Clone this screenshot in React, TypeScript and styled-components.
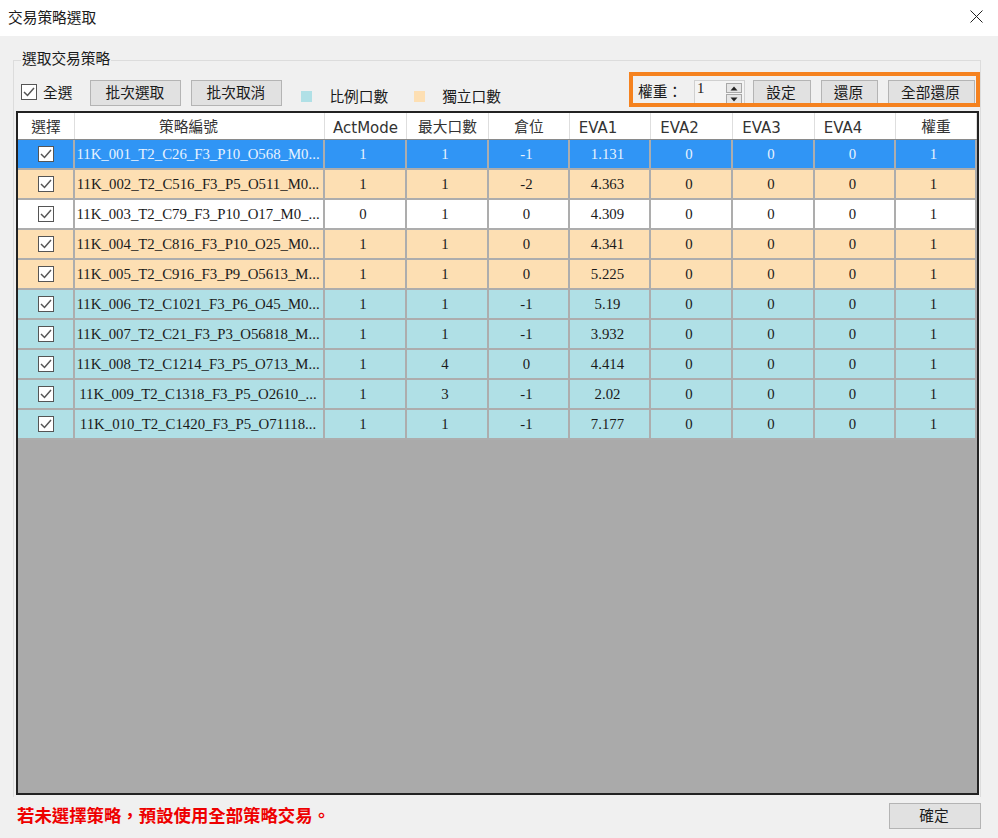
import React from "react";
import styled, { createGlobalStyle } from "styled-components";

const CJK = `"Liberation Serif", "Noto Sans CJK TC", serif`;
const UI = `"Noto Sans CJK TC", "Liberation Sans", sans-serif`;

const GlobalStyle = createGlobalStyle`
  html, body { margin: 0; padding: 0; background: #f0f0f0; }
  * { box-sizing: border-box; }
`;

const Dialog = styled.div`
  width: 998px;
  height: 838px;
  display: flex;
  flex-direction: column;
  background: #f0f0f0;
  font-family: ${UI};
  font-size: 14.7px;
  color: #1a1a1a;
  overflow: hidden;
`;

const TitleBar = styled.div`
  height: 36px;
  flex: none;
  background: #fff;
  display: flex;
  align-items: center;
  justify-content: space-between;
  padding: 0 15px 4px 8px;
`;

const Body = styled.div`
  flex: 1;
  display: flex;
  flex-direction: column;
  padding: 24px 17px 0 13px;
`;

const GroupBox = styled.div`
  position: relative;
  height: 737px;
  flex: none;
  border: 1px solid #dcdcdc;
  border-bottom: none;
  padding: 11px 1px 0 2px;
`;

const GroupTitle = styled.span`
  position: absolute;
  left: 7px;
  top: -13px;
  padding: 0 1px;
  background: #f0f0f0;
  line-height: 20px;
`;

const Toolbar = styled.div`
  height: 39px;
  display: flex;
  align-items: flex-start;
  justify-content: space-between;
`;

const LeftTools = styled.div`
  display: flex;
  align-items: flex-start;
  padding: 8px 0 0 5px;
`;

const SelectAll = styled.label`
  display: flex;
  align-items: center;
  gap: 6px;
  height: 23px;
  margin-right: 18px;
`;

const Box = styled.span`
  width: 16px;
  height: 16px;
  flex: none;
  display: flex;
  align-items: center;
  justify-content: center;
  background: #fff;
  border: 1px solid #555;
  svg { display: block; }
`;

const ToolButton = styled.button<{ $w: number }>`
  width: ${(p) => p.$w}px;
  height: 26px;
  flex: none;
  padding: 0 2px 2px 0;
  background: #e1e1e1;
  border: 1.5px solid #b4b4b4;
  font-family: ${UI};
  font-size: 14.7px;
  color: #1a1a1a;
  line-height: 1;
`;

const LeftButton = styled(ToolButton)`
  margin-right: 10px;
`;

const Legend = styled.div<{ $c: string; $gap: number }>`
  display: flex;
  align-items: center;
  height: 20px;
  margin-top: 6px;
  margin-left: ${(p) => p.$gap}px;
  gap: 17px;
  line-height: 18px;
  &::before {
    content: "";
    width: 11px;
    height: 11px;
    background: ${(p) => p.$c};
  }
`;

const WeightBar = styled.div`
  width: 351px;
  height: 35px;
  margin-right: -1px;
  border: 4px solid #f5821f;
  display: flex;
  align-items: flex-start;
  padding: 4px 0 0 5px;
  overflow: hidden;
`;

const WeightLabel = styled.span`
  width: 56px;
  line-height: 22px;
  flex: none;
`;

const Spin = styled.div`
  width: 51px;
  height: 27px;
  flex: none;
  margin-right: 8px;
  background: #f4f4f4;
  border: 1px solid #d0d0d0;
  display: flex;
  justify-content: space-between;
  padding: 0 2px 0 2px;
  font-family: ${CJK};
  line-height: 15px;
`;

const SpinButtons = styled.div`
  width: 16px;
  display: flex;
  flex-direction: column;
  gap: 1px;
  padding-top: 2px;
`;

const SpinButton = styled.div`
  height: 10px;
  background: #e6e6e6;
  border: 1px solid #a8a8a8;
  display: flex;
  align-items: center;
  justify-content: center;
`;

const WeightButton = styled(ToolButton)`
  margin-right: 10px;
`;

const Grid = styled.div`
  height: 684px;
  flex: none;
  border: 2px solid #222;
  background: #aaaaaa;
  display: flex;
  flex-direction: column;
`;

const COLS = "57px 250px 82px 82px 81px 81px 82px 82px 81px 81px";

const HeaderRow = styled.div`
  display: grid;
  grid-template-columns: ${COLS};
  height: 27px;
  background: #fff;
  border-bottom: 1px solid #8a8a8a;
`;

const HeaderCell = styled.div<{ $latin?: boolean; $shift?: number }>`
  display: flex;
  align-items: center;
  justify-content: center;
  border-right: 1px solid #dedede;
  padding: ${(p) => (p.$latin ? "3px" : "0")} ${(p) => p.$shift ?? 0}px ${(p) => (p.$latin ? "0" : "2px")} 0;
  font-family: ${(p) => (p.$latin ? `"DejaVu Sans", sans-serif` : UI)};
  font-size: ${(p) => (p.$latin ? "15px" : "14.7px")};
  color: #333;
`;

const ROW_BG: Record<string, string> = {
  blue: "#3095f5",
  orange: "#fddfb3",
  white: "#ffffff",
  teal: "#b0e0e6",
};

const Row = styled.div<{ $kind: string }>`
  display: grid;
  grid-template-columns: ${COLS};
  height: 30px;
  background: ${(p) => ROW_BG[p.$kind]};
  color: ${(p) => (p.$kind === "blue" ? "#e8f3ff" : "#1a1a1a")};
  border-bottom: 2px solid #adadad;
`;

const Cell = styled.div`
  display: flex;
  align-items: center;
  justify-content: center;
  border-right: 2px solid #adadad;
  font-family: ${CJK};
  font-size: 14.8px;
  white-space: nowrap;
  overflow: hidden;
`;

const NameCell = styled(Cell)`
  padding-right: 2px;
`;

const NumCell = styled(Cell)`
  padding-right: 4px;
`;

const Footer = styled.div`
  display: flex;
  align-items: flex-start;
  justify-content: space-between;
  padding: 4px 0 0 4px;
`;

const Warning = styled.span`
  color: #ee0000;
  font-weight: 700;
  font-size: 17.4px;
  line-height: 28px;
`;

const OkButton = styled(ToolButton)`
  margin-top: 2px;
`;

const Check = () => (
  <svg width="12" height="10" viewBox="0 0 12 10" fill="none">
    <path d="M1 5 L4.5 8.5 L11 1" stroke="#555" strokeWidth="1.5" />
  </svg>
);

const Arrow = ({ up }: { up?: boolean }) => (
  <svg width="8" height="5" viewBox="0 0 8 5">
    <path d={up ? "M4 0.5 L7.5 4.5 H0.5 Z" : "M0.5 0.5 H7.5 L4 4.5 Z"} fill="#222" />
  </svg>
);

const HEADERS: { label: string; latin?: boolean; shift?: number }[] = [
  { label: "選擇" },
  { label: "策略編號", shift: 22 },
  { label: "ActMode", latin: true },
  { label: "最大口數" },
  { label: "倉位" },
  { label: "EVA1", latin: true, shift: 24 },
  { label: "EVA2", latin: true, shift: 24 },
  { label: "EVA3", latin: true, shift: 24 },
  { label: "EVA4", latin: true, shift: 24 },
  { label: "權重" },
];

const ROWS = [
  ["blue", "11K_001_T2_C26_F3_P10_O568_M0...", "1", "1", "-1", "1.131"],
  ["orange", "11K_002_T2_C516_F3_P5_O511_M0...", "1", "1", "-2", "4.363"],
  ["white", "11K_003_T2_C79_F3_P10_O17_M0_...", "0", "1", "0", "4.309"],
  ["orange", "11K_004_T2_C816_F3_P10_O25_M0...", "1", "1", "0", "4.341"],
  ["orange", "11K_005_T2_C916_F3_P9_O5613_M...", "1", "1", "0", "5.225"],
  ["teal", "11K_006_T2_C1021_F3_P6_O45_M0...", "1", "1", "-1", "5.19"],
  ["teal", "11K_007_T2_C21_F3_P3_O56818_M...", "1", "1", "-1", "3.932"],
  ["teal", "11K_008_T2_C1214_F3_P5_O713_M...", "1", "4", "0", "4.414"],
  ["teal", "11K_009_T2_C1318_F3_P5_O2610_...", "1", "3", "-1", "2.02"],
  ["teal", "11K_010_T2_C1420_F3_P5_O71118...", "1", "1", "-1", "7.177"],
];

export default function App() {
  return (
    <Dialog>
      <GlobalStyle />
      <TitleBar>
        <span>交易策略選取</span>
        <svg width="13" height="13" viewBox="0 0 13 13" fill="none">
          <path d="M0.5 0.5 L12.5 12.5 M12.5 0.5 L0.5 12.5" stroke="#222" strokeWidth="1" />
        </svg>
      </TitleBar>
      <Body>
        <GroupBox>
          <GroupTitle>選取交易策略</GroupTitle>
          <Toolbar>
            <LeftTools>
              <SelectAll>
                <Box><Check /></Box>
                全選
              </SelectAll>
              <LeftButton $w={91}>批次選取</LeftButton>
              <LeftButton $w={91}>批次取消</LeftButton>
              <Legend $c="#b0e0e6" $gap={9}>比例口數</Legend>
              <Legend $c="#fddfb3" $gap={26}>獨立口數</Legend>
            </LeftTools>
            <WeightBar>
              <WeightLabel>權重：</WeightLabel>
              <Spin>
                1
                <SpinButtons>
                  <SpinButton><Arrow up /></SpinButton>
                  <SpinButton><Arrow /></SpinButton>
                </SpinButtons>
              </Spin>
              <WeightButton $w={58}>設定</WeightButton>
              <WeightButton $w={57}>還原</WeightButton>
              <ToolButton $w={87}>全部還原</ToolButton>
            </WeightBar>
          </Toolbar>
          <Grid>
            <HeaderRow>
              {HEADERS.map((h) => (
                <HeaderCell key={h.label} $latin={h.latin} $shift={h.shift}>{h.label}</HeaderCell>
              ))}
            </HeaderRow>
            {ROWS.map(([kind, name, mode, max, pos, eva]) => (
              <Row key={name} $kind={kind}>
                <Cell><Box><Check /></Box></Cell>
                <NameCell>{name}</NameCell>
                <NumCell>{mode}</NumCell>
                <NumCell>{max}</NumCell>
                <NumCell>{pos}</NumCell>
                <NumCell>{eva}</NumCell>
                <NumCell>0</NumCell>
                <NumCell>0</NumCell>
                <NumCell>0</NumCell>
                <NumCell>1</NumCell>
              </Row>
            ))}
          </Grid>
        </GroupBox>
        <Footer>
          <Warning>若未選擇策略，預設使用全部策略交易。</Warning>
          <OkButton $w={92}>確定</OkButton>
        </Footer>
      </Body>
    </Dialog>
  );
}
